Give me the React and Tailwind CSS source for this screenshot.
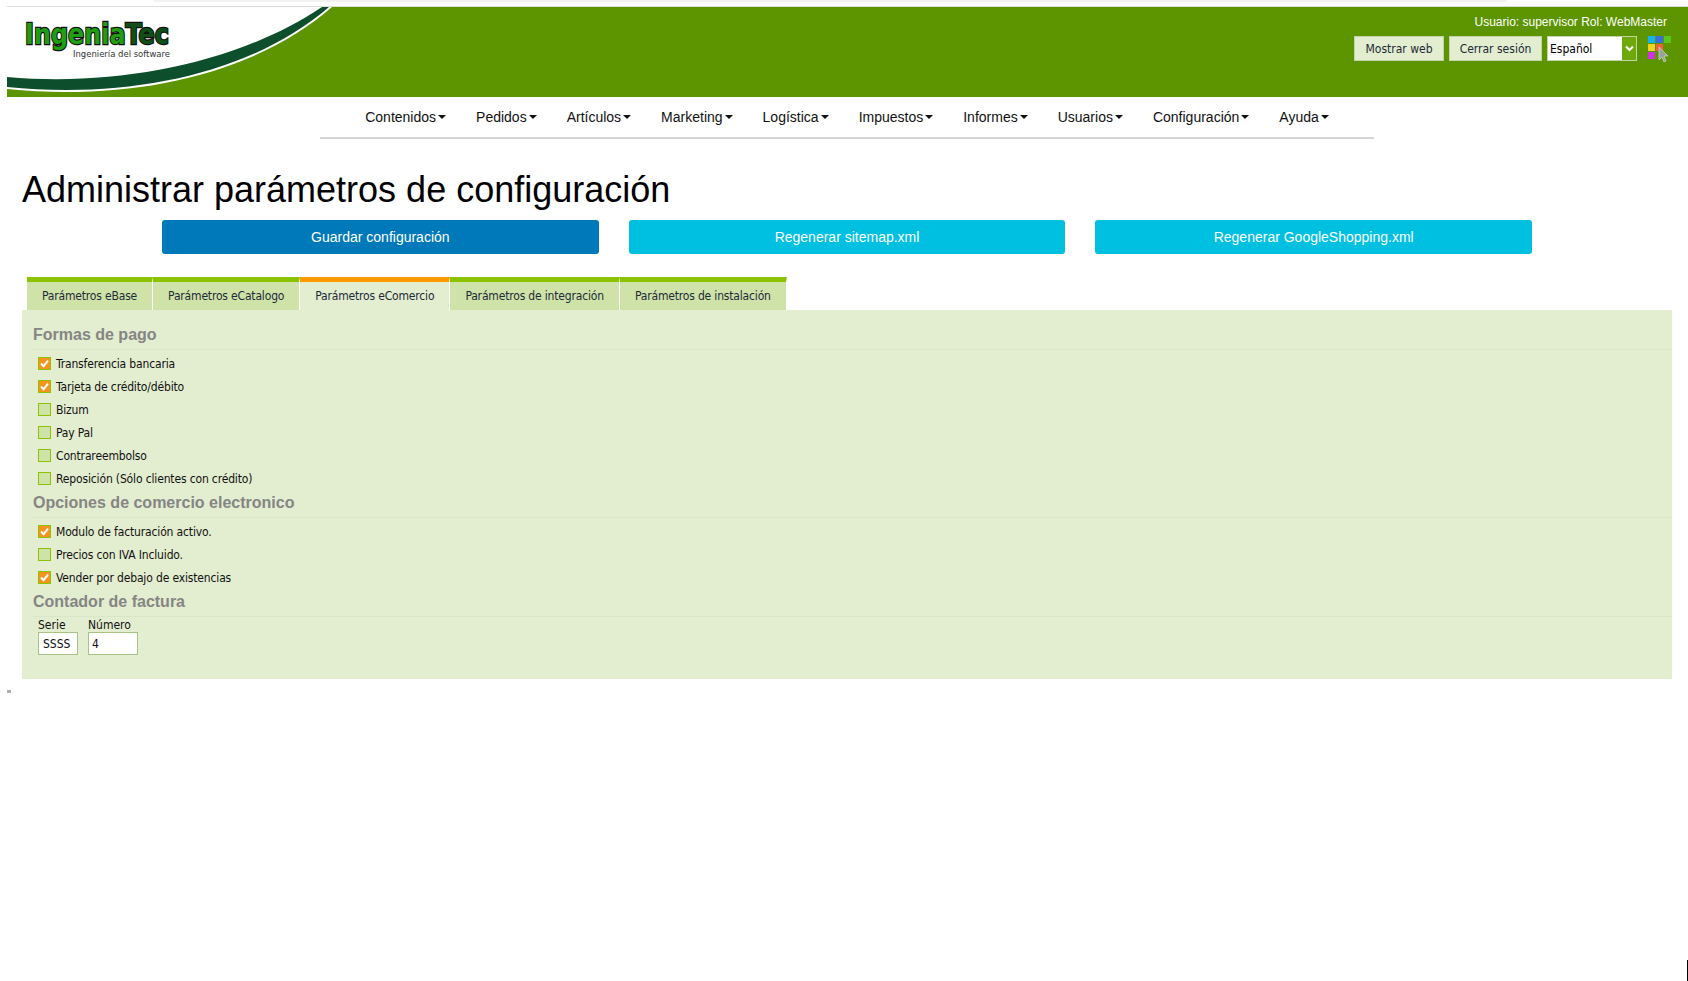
import React from "react";

const menu = ["Contenidos", "Pedidos", "Artículos", "Marketing", "Logística", "Impuestos", "Informes", "Usuarios", "Configuración", "Ayuda"];
const tabs = ["Parámetros eBase", "Parámetros eCatalogo", "Parámetros eComercio", "Parámetros de integración", "Parámetros de instalación"];

const pago = [
  ["Transferencia bancaria", true],
  ["Tarjeta de crédito/débito", true],
  ["Bizum", false],
  ["Pay Pal", false],
  ["Contrareembolso", false],
  ["Reposición (Sólo clientes con crédito)", false],
];
const comercio = [
  ["Modulo de facturación activo.", true],
  ["Precios con IVA Incluido.", false],
  ["Vender por debajo de existencias", true],
];

const Logo = () => (
  <svg width="330" height="90" viewBox="0 0 330 90" className="block shrink-0">
    <rect width="330" height="90" fill="#5c9500" />
    {/* white area + thin white line under the swoosh */}
    <path d="M0 0 L325 0 C245 70 120 94 0 82 Z" fill="#ffffff" />
    <path d="M0 70 C110 80 232 56 315 0 L322 0 C243 68 120 92 0 80 Z" fill="#0d4f2c" />
    <text x="18" y="37" fontFamily="'DejaVu Sans', sans-serif" fontWeight="700" fontSize="29" textLength="144" lengthAdjust="spacingAndGlyphs" stroke="#111111" strokeWidth="2.5" paintOrder="stroke">
      <tspan fill="#1f9e12">Ingenia</tspan>
      <tspan fill="#0d4f16">Tec</tspan>
    </text>
    <text x="66" y="50" fontFamily="'DejaVu Sans', sans-serif" fontSize="9.5" textLength="97" lengthAdjust="spacingAndGlyphs" fill="#333333">Ingeniería del software</text>
  </svg>
);

const ColorIcon = () => (
  <svg width="24" height="26" viewBox="0 0 24 26" className="block">
    <rect x="0" y="0" width="7" height="7" fill="#12b3f0" />
    <rect x="8" y="0" width="7" height="7" fill="#3a6ee0" />
    <rect x="16" y="0" width="7" height="7" fill="#58c814" />
    <rect x="0" y="8" width="7" height="7" fill="#f4d320" />
    <rect x="8" y="8" width="7" height="7" fill="#f0603a" />
    <rect x="0" y="16" width="7" height="7" fill="#d030e0" />
    <path d="M11 11 L11 24 L14 21 L16 26 L18 25 L16 20 L20 20 Z" fill="#9aa0a0" stroke="#dfe6df" strokeWidth="0.6" />
  </svg>
);

const Check = ({ checked, label }) => (
  <div className="flex h-[23px] items-center">
    <span className={`flex h-[13px] w-[13px] items-center justify-center border border-[#8cc300] ${checked ? "bg-[#f7941d]" : "bg-[#cfe3a9]"}`}>
      {checked && (
        <svg width="9" height="9" viewBox="0 0 9 9" className="block">
          <path d="M1 4.5 L3.6 7.2 L8 1.6" fill="none" stroke="#ffffff" strokeWidth="2" />
        </svg>
      )}
    </span>
    <span className="ml-[5px] text-[12px] tracking-[-0.15px] text-[#111]">{label}</span>
  </div>
);

const SectionTitle = ({ children }) => (
  <h3 className="mb-[2px] border-b border-[#d9e6c8] pt-px pb-[4px] font-['Liberation_Sans',sans-serif] text-[16px] leading-[20px] font-bold tracking-normal text-[#858585]">{children}</h3>
);

export default function App() {
  return (
    <div className="relative min-h-[981px] overflow-hidden bg-white pl-[7px] font-['Liberation_Sans',Arial,sans-serif]">
      <div className="ml-[146px] h-[2px] w-[1354px] rounded-b-md bg-[#f2f2f2]" />
      <div className="mt-[4px] h-px bg-[#dcdcdc]" />
      <header className="flex h-[90px] justify-between bg-[#5c9500]">
        <Logo />
        <div className="flex flex-col items-end pt-[7px] pr-[21px] pl-[20px]">
          <div className="text-[12px] leading-[16px] text-white">Usuario: supervisor Rol: WebMaster</div>
          <div className="mt-[6px] mr-[-5px] flex items-start font-['DejaVu_Sans_Condensed','Noto_Sans',sans-serif] text-[12px] text-[#1c2a38]">
            <button className="flex h-[25px] w-[90px] items-center justify-center border border-[#c3d4a6] bg-[#e3edcf]">Mostrar web</button>
            <button className="ml-[5px] flex h-[25px] w-[93px] items-center justify-center border border-[#c3d4a6] bg-[#e3edcf]">Cerrar sesión</button>
            <div className="ml-[5px] flex h-[25px] w-[90px] items-center border border-[#c3d4a6] bg-white">
              <span className="flex-1 pl-[2px] text-black">Español</span>
              <span className="flex h-full w-[14px] items-center justify-center bg-[#6fa80a]">
                <svg width="9" height="7" viewBox="0 0 9 7"><path d="M1 1.5 L4.5 5 L8 1.5" fill="none" stroke="#ffffff" strokeWidth="2" /></svg>
              </span>
            </div>
            <div className="ml-[11px]"><ColorIcon /></div>
          </div>
        </div>
      </header>

      <nav className="ml-[313px] flex h-[42px] w-[1054px] justify-center border-b-2 border-[#d5d5d5] text-[14px] text-[#111]">
        {menu.map((m) => (
          <a key={m} className="flex h-[40px] items-center px-[15px]">
            {m}
            <span className="ml-[2px] h-0 w-0 border-x-[4px] border-t-[4px] border-x-transparent border-t-[#111]" />
          </a>
        ))}
      </nav>

      <h1 className="mt-[30px] ml-[15px] text-[36px] leading-[42px] text-black">Administrar parámetros de configuración</h1>

      <div className="mt-[9px] ml-[155px] flex w-[1370px] gap-[30px] text-[14px] text-white">
        <button className="h-[34px] flex-1 rounded-[3px] bg-[#0079ba]">Guardar configuración</button>
        <button className="h-[34px] flex-1 rounded-[3px] bg-[#00c0e2]">Regenerar sitemap.xml</button>
        <button className="h-[34px] flex-1 rounded-[3px] bg-[#00c0e2]">Regenerar GoogleShopping.xml</button>
      </div>

      <div className="mt-[23px] ml-[20px] flex font-['DejaVu_Sans_Condensed','Noto_Sans',sans-serif] text-[12px] tracking-[-0.17px] text-[#1c2a38]">
        {tabs.map((t, i) => (
          <div
            key={t}
            className={`flex h-[33px] items-center border-t-[5px] border-r border-r-white px-[15px] ${i === 2 ? "border-t-[#ff9900] bg-[#e3edcf]" : "border-t-[#8cc300] bg-[#cfe3a9]"}`}
          >
            {t}
          </div>
        ))}
      </div>

      <section className="ml-[15px] h-[369px] w-[1650px] bg-[#e3edcf] pt-[14px] pl-[11px] font-['DejaVu_Sans_Condensed','Noto_Sans',sans-serif]">
        <SectionTitle>Formas de pago</SectionTitle>
        <div className="mb-[2px] pl-[5px]">
          {pago.map(([label, on]) => <Check key={label} label={label} checked={on} />)}
        </div>
        <SectionTitle>Opciones de comercio electronico</SectionTitle>
        <div className="mb-[2px] pl-[5px]">
          {comercio.map(([label, on]) => <Check key={label} label={label} checked={on} />)}
        </div>
        <SectionTitle>Contador de factura</SectionTitle>
        <div className="mt-[-1px] flex gap-[10px] pl-[5px] text-[12px] text-[#111]">
          <label className="flex flex-col leading-[14px]">
            Serie
            <span className="flex h-[23px] w-[40px] items-center border border-[#a9c286] bg-white pl-[4px]">SSSS</span>
          </label>
          <label className="flex flex-col leading-[14px]">
            Número
            <span className="flex h-[23px] w-[50px] items-center border border-[#a9c286] bg-white pl-[3px]">4</span>
          </label>
        </div>
      </section>

      <div className="mt-[11px] h-[3px] w-[4px] bg-[#b0b0b0]" />
      {/* stray caret at the bottom right of the capture */}
      <div className="absolute right-0 bottom-0 h-[21px] w-px bg-black" />
    </div>
  );
}
